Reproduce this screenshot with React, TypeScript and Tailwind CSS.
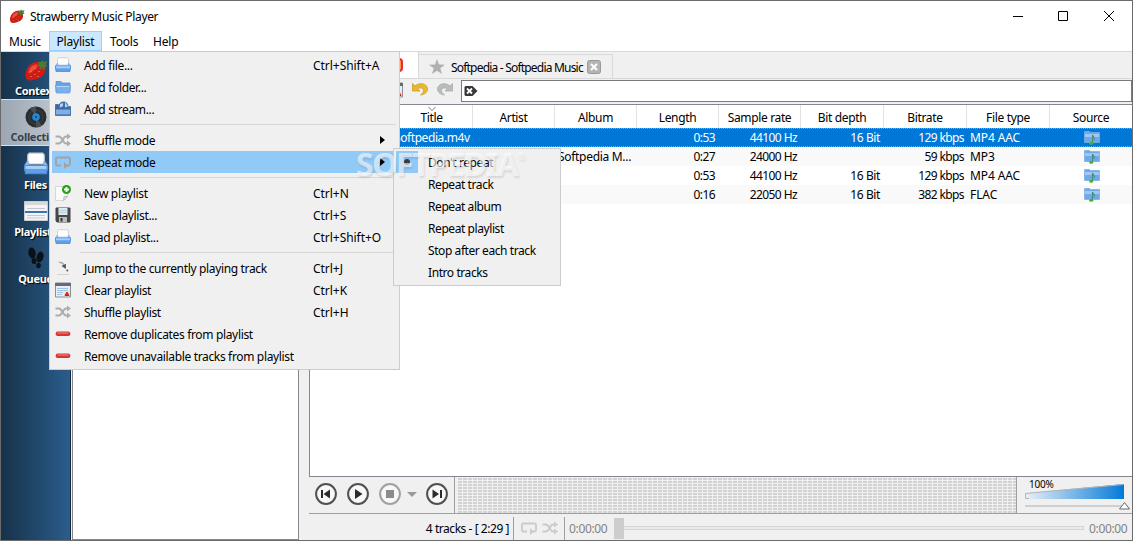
import React from "react";
import clsx from "clsx";

type MenuEntry = {
   icon: React.ReactNode;
   label: string;
   shortcut?: string;
   submenu?: boolean;
   active?: boolean;
};

function StrawberryIcon({ className }: { className: string }) {
   return (
      <svg viewBox="0 0 24 24" className={className}>
         <path d="M1.500 18C1 12 6 4 13 4c6 0 9 4 8 9-1 6-7 8-12 9-4 1-7 .5-7.500-4Z" fill="#cf1c17" />
         <path d="M4.500 15c.5-5 4-8.500 8-8.500 3 0 0 4-3 6s-3 3.500-5 2.500Z" fill="#ef4b3d" />
         <path d="m14 4 3 0 1-2 1.500 2 4-1-2 3.500 2 2-3 .5 1 3.500-3.500-2.500-1.500 2-1-3.500-3.500-1 3-1.500Z" fill="#527733" />
         <path d="M7 13v1m4-4v1m0 5v1m4-4v1m-8 4v1m7-1v1" stroke="#f2a052" strokeWidth="1" />
      </svg>
   );
}

function TrayIcon({ className }: { className: string }) {
   return (
      <svg viewBox="0 0 16 16" className={className}>
         <path d="M2.500 8V2L3.500 .7h9l1 1.300V8Z" fill="#fdfdfd" stroke="#c3cad3" strokeWidth=".8" />
         <path d="M.5 9 2 6.500h.7V9h10.600V6.500h.7L15.500 9v3H.5Z" fill="#9ccafa" stroke="#76aae6" strokeWidth=".8" />
         <path d="M.4 9h15.200l-.6 5.500H1Z" fill="#5f9fe9" stroke="#4f8bd6" strokeWidth=".8" />
         <path d="M1 9.300h14v2H1Z" fill="#a6d0fb" />
      </svg>
   );
}

function FolderIcon() {
   return (
      <svg viewBox="0 0 16 16" className="size-4">
         <path d="M1 2.500h5l1 1.500h8v9H1Z" fill="#6da2e0" stroke="#588ed0" strokeWidth=".8" />
         <path d="M.5 6.500h15l-1 7.500h-13Z" fill="#78b1f0" stroke="#669fe2" strokeWidth=".8" />
         <path d="M1.500 7.500h13" stroke="#b4d8fb" />
      </svg>
   );
}

function StreamIcon() {
   return (
      <svg viewBox="0 0 16 16" className="size-4">
         <circle cx="8.500" cy="5.500" r="5" fill="#3e6fae" />
         <path d="M5 3l3-1v3l-3 2M10 1l3 4-3 2" fill="#b5d3ef" />
         <path d="M.5 3.500h3V7h9.500l1-1.500h1.500v9H.5Z" fill="#3969ad" stroke="#3a66a5" strokeWidth=".8" />
         <path d="M1 8.500h14v5H1Z" fill="#81afe2" />
      </svg>
   );
}

function ShuffleIcon({ color = "#acacac" }: { color?: string }) {
   return (
      <svg viewBox="0 0 16 16" className="size-4" fill="none" stroke={color} strokeWidth="2">
         <path d="M.5 4.500H4C7 4.500 8 11.500 11 11.500h2M.5 11.500H4c3 0 4-7 7-7h2" />
         <path d="M12 1.500v6l4-3ZM12 8.500v6l4-3Z" fill={color} stroke="none" />
      </svg>
   );
}

function RepeatIcon({ color = "#a0a3a7" }: { color?: string }) {
   return (
      <svg viewBox="0 0 16 16" className="size-4" fill="none" stroke={color} strokeWidth="1.900">
         <path d="M6 11.500H2.500A1.500 1.500 0 0 1 1 10V5A1.500 1.500 0 0 1 2.500 3.500h11A1.500 1.500 0 0 1 15 5v5a1.500 1.500 0 0 1-1.500 1.500H10" />
         <path d="M9 8v7l4-3.500Z" fill={color} stroke="none" />
      </svg>
   );
}

function NewIcon() {
   return (
      <svg viewBox="0 0 16 16" className="size-4">
         <path d="M.5 1.500h12v10l-4 4h-8Z" fill="#fafafa" stroke="#cfcfcf" strokeWidth=".8" />
         <path d="m8.500 15.500.5-4 3.500 0Z" fill="#ddd" stroke="#b5b5b5" strokeWidth=".8" />
         <circle cx="11.500" cy="4.500" r="4.500" fill="#24a313" />
         <path d="M11.500 2v5M9 4.500h5" stroke="#fff" strokeWidth="1.800" />
      </svg>
   );
}

function SaveIcon() {
   return (
      <svg viewBox="0 0 16 16" className="size-4">
         <path d="M1 1h14v14H2l-1-1Z" fill="#474b50" stroke="#444" />
         <path d="M3.500 1h9v7h-9Z" fill="#dce9ee" />
         <path d="M4.500 3.500h7m-7 2h7" stroke="#b7d0d8" />
         <path d="M4 10h8v5H4Z" fill="#b9bbbd" />
         <path d="M5.500 11h2v3.500h-2Z" fill="#333" />
      </svg>
   );
}

function JumpIcon() {
   return (
      <svg viewBox="0 0 16 16" className="size-4">
         <path d="M4 2.500c3-.5 4.500 1 5 3" stroke="#a5a5a5" strokeWidth="1.300" fill="none" />
         <path d="m6.500 6 4.500-2.300-.2 5.300Z" fill="#555" />
         <circle cx="12.300" cy="10.500" r="1" fill="#555" />
         <path d="M2 14.500h12" stroke="#d2d2d2" />
      </svg>
   );
}

function ClearIcon() {
   return (
      <svg viewBox="0 0 16 16" className="size-4">
         <path d="M.5 1h15v14H.5Z" fill="#e7eef5" stroke="#8b8f94" />
         <path d="M0 1h16v3H0Z" fill="#666b73" />
         <path d="M2 6.500h11m-11 2h11m-11 2h6m-6 2h5" stroke="#9fc4e6" />
         <path d="M9 9h6v5H9Z" fill="#f3dfdd" />
         <path d="m10 13.500 2-3.500 2 3.500Z" fill="#d8291f" stroke="#cf2018" />
      </svg>
   );
}

function RemoveIcon() {
   return (
      <svg viewBox="0 0 16 16" className="size-4">
         <rect x=".8" y="5.500" width="14.400" height="4.500" rx="1.800" fill="#d93434" />
         <path d="M2.500 7h11" stroke="#f08a86" />
      </svg>
   );
}

function VinylIcon() {
   return (
      <svg viewBox="0 0 22 22" className="size-[22px]">
         <circle cx="11" cy="11" r="10.500" fill="#2b2e30" />
         <path d="M11 11 5 2l6-1.500ZM11 11l6 9-6 1.500Z" fill="#4a4e51" />
         <circle cx="11" cy="11" r="7" fill="none" stroke="#45494c" strokeWidth=".6" />
         <circle cx="11" cy="11" r="3.800" fill="#2387e0" />
         <circle cx="11" cy="11" r="1" fill="#123c63" />
      </svg>
   );
}

function ListIcon() {
   return (
      <svg viewBox="0 0 24 20" className="h-5 w-6">
         <path d="M.5.5h23v19H.5Z" fill="#f4f4f4" stroke="#c5ccd3" />
         <path d="M1 1h22v3H1Z" fill="#d8d8d8" />
         <path d="M3 7.500h18M3 14.500h18M3 17h18" stroke="#c4c8cc" />
         <path d="M1 10h22v2H1Z" fill="#3d70b4" />
      </svg>
   );
}

function FeetIcon() {
   return (
      <svg viewBox="0 0 18 22" className="h-[22px] w-[18px]" fill="#0b1116">
         <ellipse cx="5" cy="6" rx="3.600" ry="5.500" transform="rotate(-10 5 6)" />
         <ellipse cx="7" cy="14" rx="2.400" ry="3" />
         <ellipse cx="13" cy="10" rx="3.400" ry="5.500" transform="rotate(14 13 10)" />
         <ellipse cx="11.500" cy="18.500" rx="2.300" ry="2.800" />
      </svg>
   );
}

function SourceIcon() {
   return (
      <svg viewBox="0 0 16 16" className="size-4">
         <path d="M.5 1.500h5l1 1h9v10H.5Z" fill="#70a9e7" stroke="#7fb0e6" strokeWidth=".8" />
         <path d="M1 4h14v3H1Z" fill="#a0c8f3" />
         <path d="M8.500 13V5c1 2 3 3 1.500 5" fill="none" stroke="#3f8f7c" strokeWidth="1.100" />
         <ellipse cx="7.200" cy="13.300" rx="2" ry="1.500" fill="#43b52c" />
      </svg>
   );
}

function UndoIcon({ redo }: { redo?: boolean }) {
   return (
      <svg viewBox="0 0 16 16" className={clsx("size-4", redo && "-scale-x-100")}>
         <path
            d="M.5 1.500V9h7.500L5.500 7C8 5 11.500 6 11.500 8.500c0 2-1 3-3 4.500 4-.5 7-2.500 7-6 0-5-7.500-7.500-12.500-3Z"
            fill={redo ? "#b9bcbd" : "#e8b82e"}
            stroke={redo ? "#a9acad" : "#cf9d23"}
            strokeWidth=".8"
         />
      </svg>
   );
}

function RoundButton({ disabled, children }: { disabled?: boolean; children: React.ReactNode }) {
   const color = disabled ? "#a0a0a0" : "#505050";
   return (
      <svg viewBox="0 0 22 22" className="size-[22px]">
         <circle cx="11" cy="11" r="9.900" fill="#f8f8f8" stroke={color} strokeWidth="2" />
         <g fill={disabled ? "#8b8b8b" : "#2b2b2b"}>{children}</g>
      </svg>
   );
}

const menuGroups: MenuEntry[][] = [
   [
      { icon: <TrayIcon className="size-4" />, label: "Add file...", shortcut: "Ctrl+Shift+A" },
      { icon: <FolderIcon />, label: "Add folder..." },
      { icon: <StreamIcon />, label: "Add stream..." },
   ],
   [
      { icon: <ShuffleIcon />, label: "Shuffle mode", submenu: true },
      { icon: <RepeatIcon />, label: "Repeat mode", submenu: true, active: true },
   ],
   [
      { icon: <NewIcon />, label: "New playlist", shortcut: "Ctrl+N" },
      { icon: <SaveIcon />, label: "Save playlist...", shortcut: "Ctrl+S" },
      { icon: <TrayIcon className="size-4" />, label: "Load playlist...", shortcut: "Ctrl+Shift+O" },
   ],
   [
      { icon: <JumpIcon />, label: "Jump to the currently playing track", shortcut: "Ctrl+J" },
      { icon: <ClearIcon />, label: "Clear playlist", shortcut: "Ctrl+K" },
      { icon: <ShuffleIcon />, label: "Shuffle playlist", shortcut: "Ctrl+H" },
      { icon: <RemoveIcon />, label: "Remove duplicates from playlist" },
      { icon: <RemoveIcon />, label: "Remove unavailable tracks from playlist" },
   ],
];

const repeatModes = [
   "Don't repeat",
   "Repeat track",
   "Repeat album",
   "Repeat playlist",
   "Stop after each track",
   "Intro tracks",
];

const sidebarItems = [
   { label: "Context", icon: <StrawberryIcon className="size-6" /> },
   { label: "Collection", icon: <VinylIcon />, active: true },
   { label: "Files", icon: <TrayIcon className="size-6" /> },
   { label: "Playlists", icon: <ListIcon /> },
   { label: "Queue", icon: <FeetIcon /> },
];

const columns = ["", "Title", "Artist", "Album", "Length", "Sample rate", "Bit depth", "Bitrate", "File type", "Source"];

const tracks = [
   { title: "Softpedia.m4v", album: "", length: "0:53", rate: "44100 Hz", depth: "16 Bit", bitrate: "129 kbps", type: "MP4 AAC" },
   { title: "", album: "Softpedia M...", length: "0:27", rate: "24000 Hz", depth: "", bitrate: "59 kbps", type: "MP3" },
   { title: "", album: "", length: "0:53", rate: "44100 Hz", depth: "16 Bit", bitrate: "129 kbps", type: "MP4 AAC" },
   { title: "", album: "", length: "0:16", rate: "22050 Hz", depth: "16 Bit", bitrate: "382 kbps", type: "FLAC" },
];

const gridCols = "grid grid-cols-[81px_82px_82px_82px_82px_82px_83px_83px_83px_1fr]";

function TitleBar() {
   return (
      <div className="flex h-[30px] shrink-0 items-center pl-2">
         <StrawberryIcon className="size-4" />
         <span className="ml-[5px] flex-1 pt-px tracking-[-0.34px]">Strawberry Music Player</span>
         <svg viewBox="0 0 104 12" className="mr-4 h-3 w-[104px]" fill="none" stroke="#000">
            <path d="M1 6.500h10" />
            <path d="M46.500 1.500h9v9h-9Z" />
            <path d="m92 1 10 10m0-10L92 11" />
         </svg>
      </div>
   );
}

function MenuBar() {
   return (
      <div className="flex h-5 shrink-0 items-center">
         <span className="w-12 pt-px pl-2">Music</span>
         <span className="flex h-5 w-[53px] items-center justify-center border border-[#99d1ff] bg-[#cce8ff] pt-0.5">
            Playlist
         </span>
         <span className="ml-2 w-[43px] pt-px">Tools</span>
         <span className="pt-px">Help</span>
      </div>
   );
}

function Sidebar() {
   return (
      <div className="flex w-[70px] shrink-0 flex-col border-r border-[#17293a] bg-linear-to-r from-[#17324a] to-[#2a5d8d]">
         {sidebarItems.map((item) => (
            <div
               key={item.label}
               className={clsx(
                  "flex h-[47px] shrink-0 flex-col items-center text-[11px] font-bold tracking-[-0.3px]",
                  item.active
                     ? "border-y border-[#dbe0e5] bg-linear-to-r from-[#9ba6b2] to-[#c6cdd5] text-[#38424c]"
                     : "text-white [text-shadow:1px_1px_1px_#000]"
               )}
            >
               <span className="mt-1.5 flex h-6 items-center">{item.icon}</span>
               <span className={clsx("pt-px leading-4", item.label === "Collection" && "ml-0.5")}>{item.label}</span>
            </div>
         ))}
      </div>
   );
}

function Tabs() {
   return (
      <div className="flex h-[27px] shrink-0 items-end border-b border-[#d9d9d9] bg-[#f0f0f0]">
         <div className="flex h-[26px] w-[110px] items-center justify-end border-r border-[#d9d9d9] bg-white pr-[15px]">
            <span className="size-3.5 rounded-sm border-2 border-[#f02b2b] bg-[#f09b55]" />
         </div>
         <div className="flex h-6 w-[194px] items-center border-t border-r border-[#d9d9d9] pl-2.5">
            <svg viewBox="0 0 16 16" className="size-4" fill="#b0b0b0">
               <path d="m8 0 2 5.500 6 .3-4.700 3.500L13 15l-5-3.200L3 15l1.700-5.700L0 5.800l6-.3Z" />
            </svg>
            <span className="ml-1.5 w-[136px] pt-0.5 tracking-[-0.8px] whitespace-nowrap">
               Softpedia - Softpedia Music
            </span>
            <svg viewBox="0 0 14 14" className="size-3.5">
               <rect x=".5" y=".5" width="13" height="13" rx="2" fill="#b4b4b4" stroke="#999" />
               <path d="m4 4 6 6m0-6-6 6" stroke="#fff" strokeWidth="2" />
            </svg>
         </div>
      </div>
   );
}

function Toolbar() {
   return (
      <div className="flex h-[25px] shrink-0 items-start pt-px">
         <div className="flex w-[152px] items-center justify-end gap-[9px] pt-0.5 pr-2">
            <ClearIcon />
            <UndoIcon />
            <UndoIcon redo />
         </div>
         <div className="flex h-[22px] flex-1 items-center border border-[#7a7a7a] bg-white pl-0.5">
            <svg viewBox="0 0 14 12" className="h-3 w-3.5">
               <path d="M1.500 1h7l5 5-5 5h-7L.5 10V2Z" fill="#383838" />
               <path d="m3 3.500 5 5m0-5-5 5" stroke="#fff" strokeWidth="1.800" />
            </svg>
         </div>
      </div>
   );
}

function TrackTable() {
   return (
      <div className="flex-1 border-y border-l border-[#828790] bg-white">
         <div className={clsx(gridCols, "h-[23px]")}>
            {columns.map((name) => (
               <div
                  key={name}
                  className="relative flex items-center justify-center border-r border-[#e2e2e2] pt-0.5 tracking-[-0.35px] last:border-0"
               >
                  {name === "Title" && (
                     <svg viewBox="0 0 8 4" className="absolute top-0.5 h-1 w-2" fill="none" stroke="#777">
                        <path d="m.5 0 3.500 3.500L7.500 0" />
                     </svg>
                  )}
                  {name}
               </div>
            ))}
         </div>
         {tracks.map((track, i) => (
            <div
               key={i}
               className={clsx(
                  gridCols,
                  "h-[19px] items-center leading-[17px] tracking-[-0.6px]",
                  i === 0 && "border-y border-dotted border-[#ff8728] bg-[#0078d7] text-white",
                  i % 2 === 1 && "bg-[#f9f9f9]"
               )}
            >
               <span />
               <span className="pl-[3px] tracking-[-0.42px]">{track.title}</span>
               <span />
               <span className="pl-[3px] tracking-[-0.3px]">{track.album}</span>
               <span className="pr-1 text-right">{track.length}</span>
               <span className="pr-1 text-right">{track.rate}</span>
               <span className="pr-1 text-right tracking-[-0.4px]">{track.depth}</span>
               <span className="pr-[3px] text-right">{track.bitrate}</span>
               <span className="pl-[3px] tracking-[-0.1px]">{track.type}</span>
               <span className="flex justify-center pl-0.5">
                  <SourceIcon />
               </span>
            </div>
         ))}
      </div>
   );
}

function PlayerBar() {
   return (
      <div className="flex h-[37px] shrink-0 border-b border-[#a0a0a0] pl-1.5">
         <div className="flex w-[140px] items-center border-r border-[#a0a0a0] pb-0.5">
            <RoundButton>
               <path d="M6 7h2v8H6ZM15 6.500v9L8.500 11Z" />
            </RoundButton>
            <span className="ml-2.5 flex">
               <RoundButton>
                  <path d="M8 6v10l7.500-5Z" />
               </RoundButton>
            </span>
            <span className="ml-2.5 flex">
               <RoundButton disabled>
                  <path d="M7 7h8v8H7Z" />
               </RoundButton>
            </span>
            <svg viewBox="0 0 10 5" className="ml-1.5 h-[5px] w-2.5" fill="#9a9a9a">
               <path d="M0 0h10L5 5Z" />
            </svg>
            <span className="ml-[9px] flex">
               <RoundButton>
                  <path d="M6.500 6.500v9L13 11ZM14 7h2v8h-2Z" />
               </RoundButton>
            </span>
         </div>
         <svg className="mt-px ml-[3px] h-[35px] w-[558px] shrink-0">
            <defs>
               <pattern id="blocks" width="5" height="3" patternUnits="userSpaceOnUse">
                  <rect width="4" height="2" fill="#d2d2d2" />
               </pattern>
            </defs>
            <rect width="558" height="35" fill="url(#blocks)" />
         </svg>
         <div className="flex flex-1 border-l border-[#a0a0a0]">
            <svg viewBox="0 0 115 36" className="h-9 w-[115px] shrink-0">
               <defs>
                  <linearGradient id="volume">
                     <stop offset="0" stopColor="#e8f0f6" />
                     <stop offset=".9" stopColor="#1c86db" />
                     <stop offset="1" stopColor="#0078d7" />
                  </linearGradient>
               </defs>
               <path d="M8.500 16 107 7v15H8.500Z" fill="url(#volume)" />
               <path d="M12 21.500H8.500v-5L106.500 7.500" fill="none" stroke="#b4b4b4" />
               <text x="12" y="11" fontSize="10" letterSpacing="-.2" fill="#000">100%</text>
               <path d="M8 29h99" stroke="#cfcfcf" strokeWidth="2" />
               <path d="m107.500 25.500 5 6.500h-10Z" fill="#fff" stroke="#666" />
            </svg>
         </div>
      </div>
   );
}

function StatusBar() {
   return (
      <div className="flex h-[26px] shrink-0 items-center">
         <span className="w-[204px] pt-1 pr-1 text-right tracking-[-0.45px]">4 tracks - [ 2:29 ]</span>
         <div className="mt-0.5 flex h-[23px] w-[51px] items-center gap-[5px] border-l border-[#a0a0a0] pl-[7px]">
            <RepeatIcon color="#cbcbcb" />
            <ShuffleIcon color="#cbcbcb" />
         </div>
         <div className="mt-0.5 flex h-[23px] flex-1 items-center border-l border-[#a0a0a0] pl-1 tracking-[-0.35px] text-[#838383]">
            <span className="w-[45px] pt-0.5">0:00:00</span>
            <span className="h-[21px] w-2.5 bg-[#cdcdcd]" />
            <span className="h-1 w-[460px] border border-l-0 border-[#d6d6d6] bg-[#e9e9e9]" />
            <span className="ml-[5px] pt-0.5">0:00:00</span>
         </div>
      </div>
   );
}

function PlaylistMenu() {
   return (
      <div className="absolute top-[50px] left-[48px] w-[351px] border border-[#ccc] bg-[#f0f0f0] p-0.5 tracking-[-0.34px]">
         {menuGroups.map((group, i) => (
            <div key={i}>
               {i > 0 && <div className="my-1 mr-px ml-7 h-px bg-[#d7d7d7]" />}
               {group.map((item) => (
                  <div
                     key={item.label}
                     className={clsx("flex h-[22px] items-center pl-[3px]", item.active && "bg-[#91c9f7]")}
                  >
                     {item.icon}
                     <span className="ml-[13px] w-[229px] pt-0.5 whitespace-nowrap">{item.label}</span>
                     <span className="w-[67px] pt-0.5 tracking-[-0.04px] whitespace-nowrap">{item.shortcut}</span>
                     {item.submenu && (
                        <svg viewBox="0 0 5 8" className="h-2 w-[5px]">
                           <path d="M0 0v8l5-4Z" />
                        </svg>
                     )}
                  </div>
               ))}
            </div>
         ))}
      </div>
   );
}

function RepeatMenu() {
   return (
      <div className="absolute top-[147px] left-[392px] w-[168px] border border-[#ccc] bg-[#f0f0f0] p-0.5 tracking-[-0.42px]">
         {repeatModes.map((mode, i) => (
            <div key={mode} className="flex h-[22px] items-center">
               <span className={clsx("flex size-[22px] items-center justify-center", i === 0 && "bg-[#91c9f7]")}>
                  {i === 0 && <span className="size-1.5 rounded-full bg-[#3c3c3c]" />}
               </span>
               <span className="ml-2.5 pt-0.5">{mode}</span>
            </div>
         ))}
      </div>
   );
}

export default function App() {
   return (
      <div className="relative flex h-[541px] w-[1133px] flex-col overflow-hidden border border-[#6b6b6b] bg-white font-['Noto_Sans','Open_Sans',sans-serif] text-[12px] leading-4 tracking-[-0.2px] text-black">
         <TitleBar />
         <MenuBar />
         <div className="flex min-h-0 flex-1 border-t border-[#d9d9d9] bg-[#f0f0f0]">
            <Sidebar />
            <div className="ml-px w-[227px] shrink-0 border border-[#828790] bg-white" />
            <div className="ml-[10px] flex min-w-0 flex-1 flex-col">
               <Tabs />
               <Toolbar />
               <TrackTable />
               <PlayerBar />
               <StatusBar />
            </div>
         </div>
         <PlaylistMenu />
         <RepeatMenu />
         <div className="absolute top-[145px] left-[355px] flex text-[32px] leading-9 font-bold tracking-[-1.5px] text-white/60 [text-shadow:1px_2px_2px_rgba(0,0,0,0.1)]">
            SOFTPEDIA
            <span className="text-[10px] leading-5">®</span>
         </div>
      </div>
   );
}
